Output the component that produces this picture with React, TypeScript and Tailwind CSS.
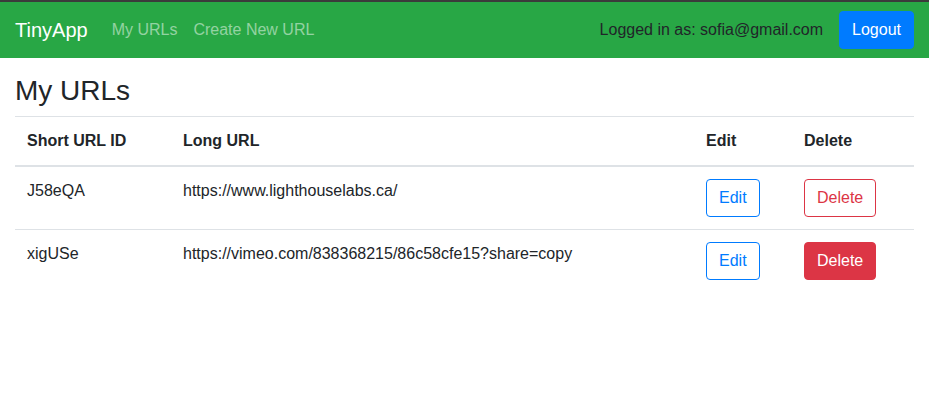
const urls = [
  { id: 'J58eQA', long: 'https://www.lighthouselabs.ca/', solid: false },
  { id: 'xigUSe', long: 'https://vimeo.com/838368215/86c58cfe15?share=copy', solid: true },
];

export default function App() {
  return (
    <div className="min-h-screen bg-white font-['Liberation_Sans',Arial,sans-serif] text-base leading-6 text-[#212529]">
      {/* Navbar */}
      <nav className="flex h-[58px] items-center border-t-2 border-[#3b3b3b] bg-[#28a745] px-[15px]">
        <span className="mr-4 text-xl leading-[30px] text-white">TinyApp</span>
        <a className="px-2 text-[rgba(255,255,255,0.5)]">My URLs</a>
        <a className="px-2 text-[rgba(255,255,255,0.5)]">Create New URL</a>
        <div className="ml-auto flex items-center gap-4">
          <span className="text-[#212529]">Logged in as: sofia@gmail.com</span>
          <button className="h-[38px] rounded border border-[#007bff] bg-[#007bff] px-3 text-white">Logout</button>
        </div>
      </nav>

      <main className="px-[15px]">
        <h3 className="mb-2 mt-4 text-[28px] leading-[34px] font-medium">My URLs</h3>
        <table className="w-full border-collapse text-left">
          <thead>
            <tr className="border-t border-[#dee2e6]">
              <th className="w-[156px] border-b-2 border-[#dee2e6] p-3 font-bold">Short URL ID</th>
              <th className="border-b-2 border-[#dee2e6] p-3 font-bold">Long URL</th>
              <th className="w-[98px] border-b-2 border-[#dee2e6] p-3 font-bold">Edit</th>
              <th className="w-[122px] border-b-2 border-[#dee2e6] p-3 font-bold">Delete</th>
            </tr>
          </thead>
          <tbody>
            {urls.map((u) => (
              <tr key={u.id} className="border-t border-[#dee2e6] first:border-t-0">
                <td className="p-3 align-top">{u.id}</td>
                <td className="p-3 align-top">{u.long}</td>
                <td className="p-3 align-top">
                  <button className="h-[38px] rounded border border-[#007bff] px-3 text-[#007bff]">Edit</button>
                </td>
                <td className="p-3 align-top">
                  {u.solid ? (
                    <button className="h-[38px] rounded border border-[#dc3545] bg-[#dc3545] px-3 text-white">Delete</button>
                  ) : (
                    <button className="h-[38px] rounded border border-[#dc3545] px-3 text-[#dc3545]">Delete</button>
                  )}
                </td>
              </tr>
            ))}
          </tbody>
        </table>
      </main>
    </div>
  );
}
